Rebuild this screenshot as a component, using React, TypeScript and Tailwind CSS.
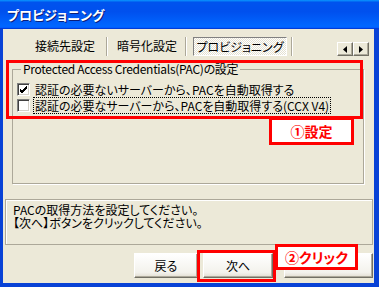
const btn =
  "flex items-center justify-center h-[25px] border border-t-white border-l-white border-r-[#716F64] border-b-[#716F64] bg-[linear-gradient(#ffffff,#f3f2ec_80%,#e2ded2)] shadow-[inset_-1px_-1px_0_#ACA899]";

const arrowBtn =
  "flex items-center justify-center w-[16px] h-[14px] border border-t-white border-l-white border-r-[#716F64] border-b-[#716F64] bg-[#ECE9D8] shadow-[inset_-1px_-1px_0_#ACA899]";

function CheckBox({ checked }: { checked?: boolean }) {
  return (
    <div className="w-[13px] h-[13px] shrink-0 bg-white border border-t-[#808080] border-l-[#808080] border-r-white border-b-white shadow-[inset_1px_1px_0_#404040,inset_-1px_-1px_0_#D4D0C8] flex items-center justify-center">
      {checked && (
        <svg width="9" height="9" viewBox="0 0 9 9">
          <path d="M1 4 L3 6 L8 1 M1 5 L3 7 L8 2 M1 6 L3 8 L8 3" stroke="#000" strokeWidth="1" fill="none" shapeRendering="crispEdges" />
        </svg>
      )}
    </div>
  );
}

function Sep() {
  return <div className="w-[2px] h-[19px] border-l border-l-[#ACA899] border-r border-r-white" />;
}

export default function App() {
  return (
    <div className="relative w-[379px] h-[287px] overflow-hidden bg-[#0842D6] font-['Noto_Sans_CJK_JP',sans-serif] text-[12px] leading-[13px] text-black [font-feature-settings:'palt']">
      {/* title bar */}
      <div className="h-[29px] flex items-center pl-[7px] bg-[linear-gradient(#0997ff,#0053ee_8%,#0050ee_40%,#0066ff_88%,#0066ff_93%,#005bff_95%,#003dd7_96%,#003dd7)] text-white font-bold text-[13px] [text-shadow:1px_1px_0_#0a1e7a]">
        プロビジョニング
      </div>

      {/* body */}
      <div className="ml-[3px] w-[371px] h-[254px] bg-[#ECE9D8] flex flex-col">
        {/* tabs */}
        <div className="h-[28px] flex items-start pt-[8px] pl-[32px] pr-[5px]">
          <span className="w-[71px] mt-[2px]">接続先設定</span>
          <Sep />
          <span className="w-[68px] ml-[9px] mt-[2px]">暗号化設定</span>
          <Sep />
          <div className="ml-[6px] w-[94px] h-[19px] flex items-center justify-center border border-t-[#808080] border-l-[#808080] border-r-white border-b-white bg-[repeating-conic-gradient(#ffffff_0_25%,#e4e1d2_0_50%)] bg-[length:2px_2px]">
            プロビジョニング
          </div>
          <div className="ml-[4px]">
            <Sep />
          </div>
          <div className="ml-auto mt-[5px] flex">
            <div className={arrowBtn}>
              <svg width="4" height="7" viewBox="0 0 4 7">
                <path d="M4 0 L0 3.5 L4 7 Z" fill="#000" />
              </svg>
            </div>
            <div className={arrowBtn}>
              <svg width="4" height="7" viewBox="0 0 4 7">
                <path d="M0 0 L4 3.5 L0 7 Z" fill="#000" />
              </svg>
            </div>
          </div>
        </div>

        {/* group box */}
        <fieldset className="mt-[6px] ml-[9px] w-[352px] h-[121px] border border-[#ACA899] shadow-[1px_1px_0_#ffffff] pl-[4px]">
          <legend className="ml-[4px] px-[2px] leading-[12px] tracking-[-0.3px]">Protected Access Credentials(PAC)の設定</legend>
          <div className="mt-[6px] flex items-center gap-[5px] h-[16px]">
            <CheckBox checked />
            <span>認証の必要ないサーバーから、PACを自動取得する</span>
          </div>
          <div className="flex items-center gap-[4px] h-[16px]">
            <CheckBox />
            <span className="outline-1 outline-dotted outline-black px-[1px] py-[1px]">認証の必要なサーバーから、PACを自動取得する(CCX V4)</span>
          </div>
        </fieldset>

        {/* message box */}
        <div className="mt-[15px] ml-[2px] w-[368px] h-[46px] border border-[#ACA899] shadow-[inset_1px_1px_0_#ffffff] pl-[7px] pt-[3px]">
          <div>PACの取得方法を設定してください。</div>
          <div>【次へ】ボタンをクリックしてください。</div>
        </div>

        {/* buttons */}
        <div className="mt-[8px] flex">
          <div className={`${btn} ml-[131px] w-[64px]`}>戻る</div>
          <div className={`${btn} ml-[5px] w-[70px]`}>次へ</div>
          <div className={`${btn} ml-[11px] w-[89px]`} />
        </div>
      </div>

      {/* annotations */}
      <div className="absolute left-[6px] top-[60px] w-[357px] h-[59px] border-[3px] border-[#FF0000]" />
      <div className="absolute left-[269px] top-[117px] w-[85px] h-[28px] border-[3px] border-[#FF0000] bg-white flex items-center justify-center text-[#FF0000] font-bold text-[14px] leading-[14px]">
        ①設定
      </div>
      <div className="absolute left-[197px] top-[250px] w-[79px] h-[32px] border-[3px] border-[#FF0000]" />
      <div className="absolute left-[275px] top-[244px] w-[83px] h-[26px] border-[3px] border-[#FF0000] bg-white flex items-center justify-center text-[#FF0000] font-bold text-[14px] leading-[14px]">
        ②クリック
      </div>
    </div>
  );
}
